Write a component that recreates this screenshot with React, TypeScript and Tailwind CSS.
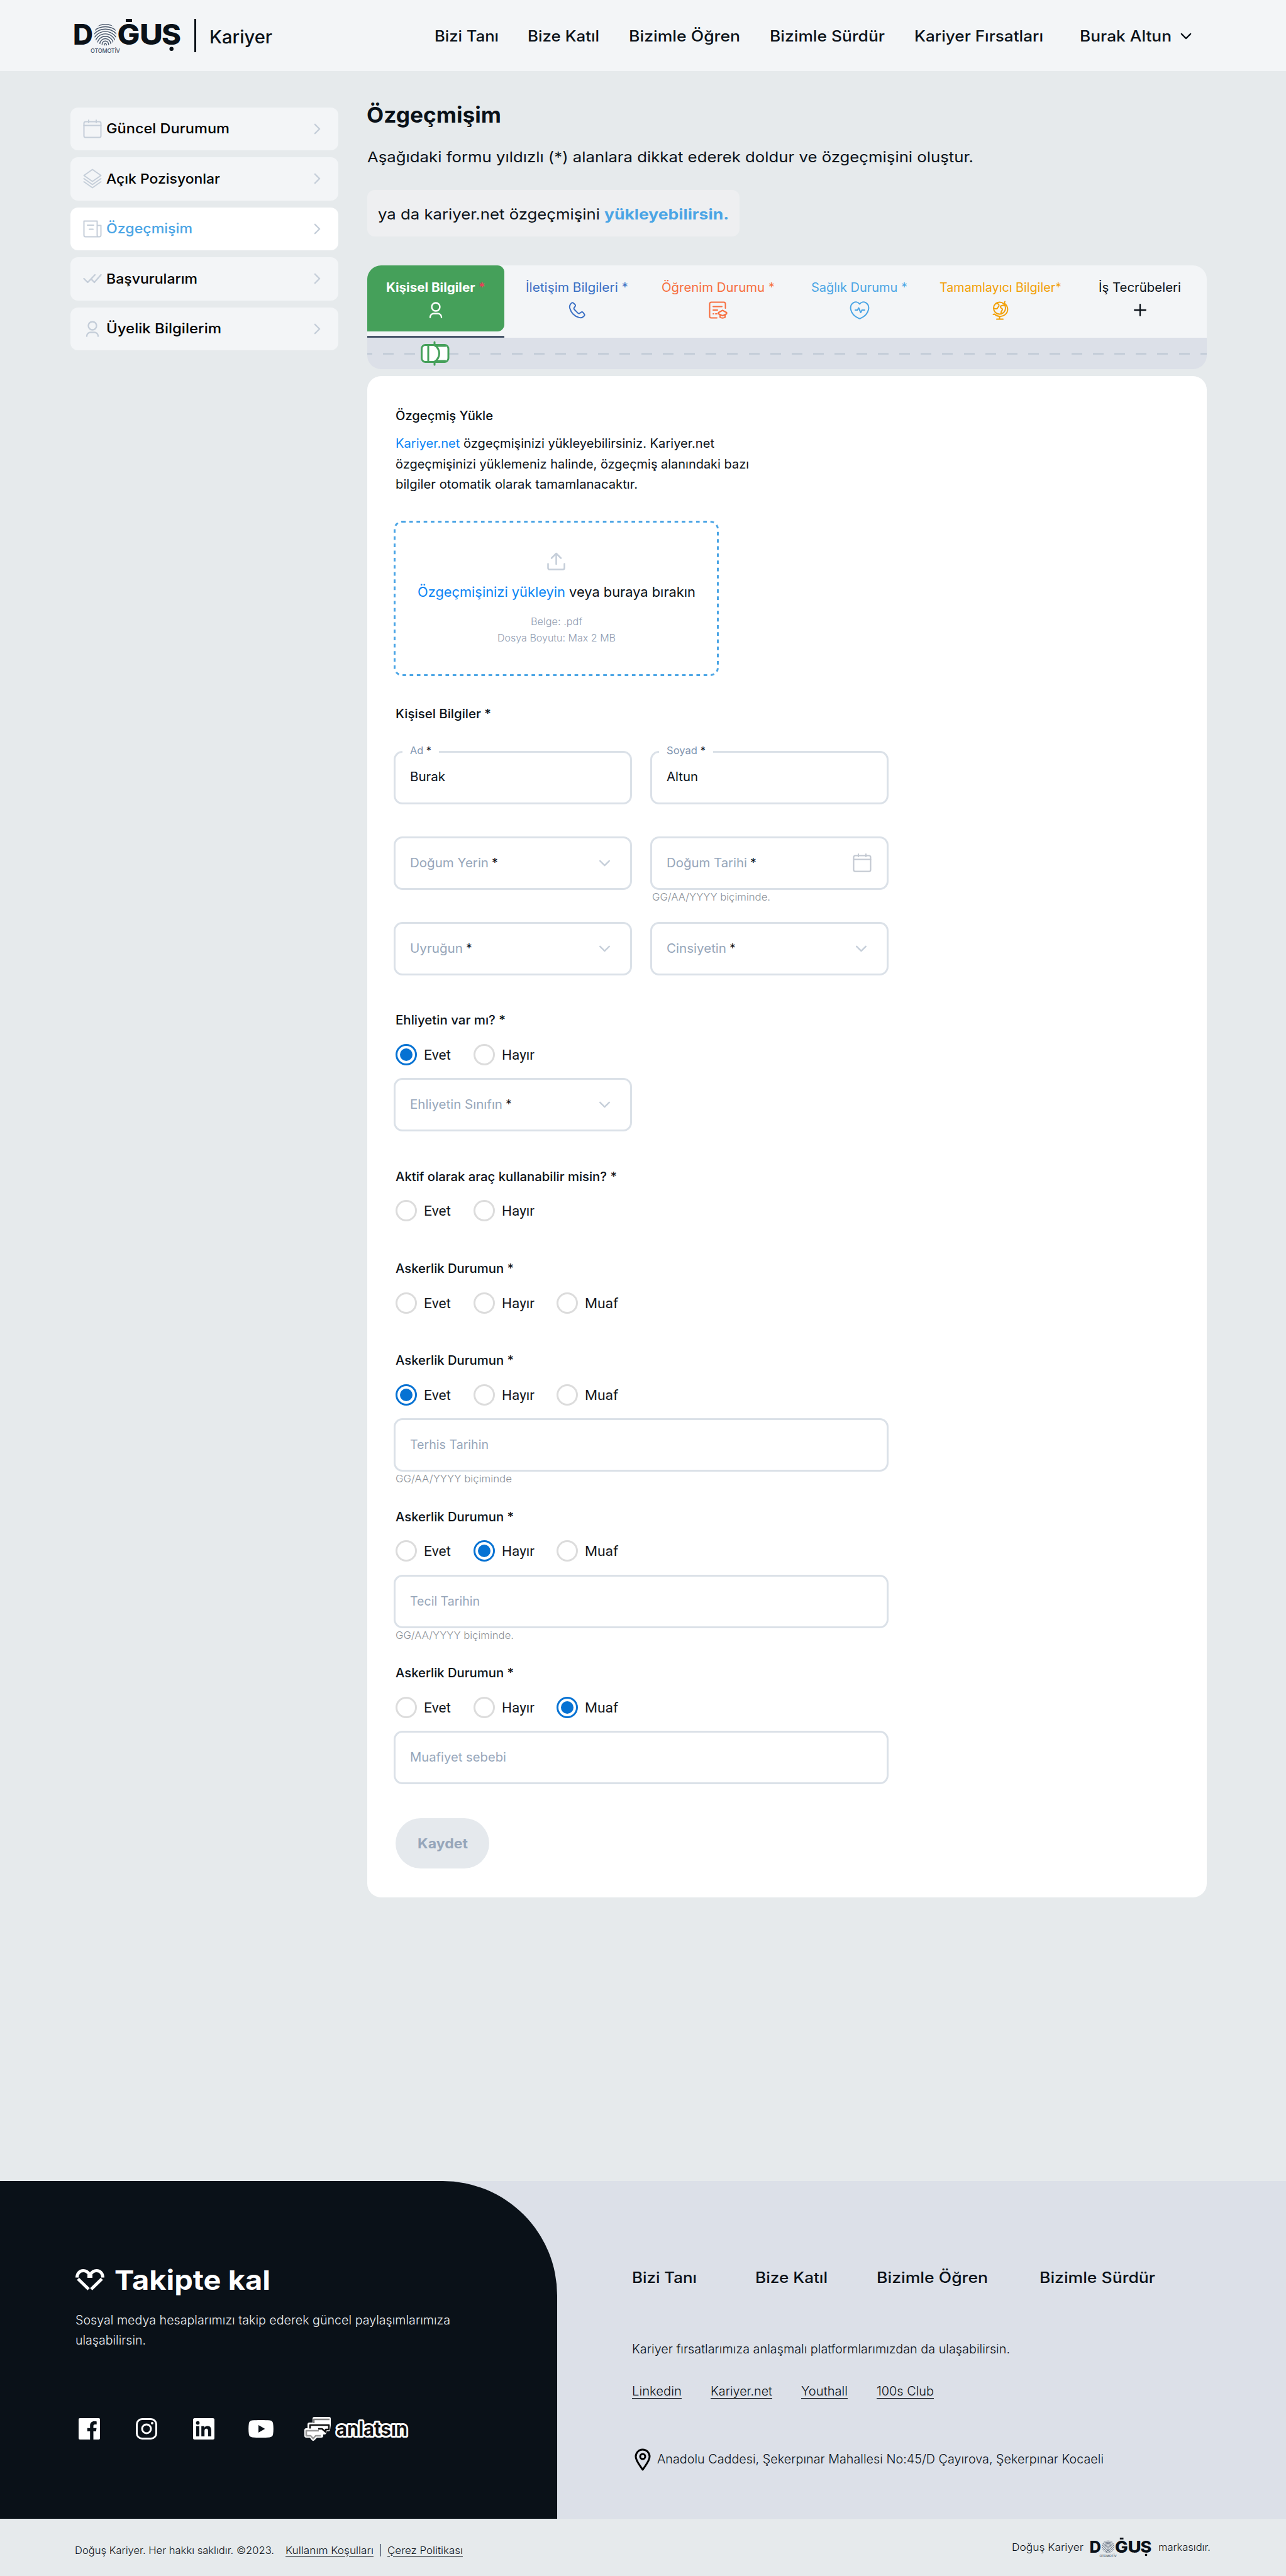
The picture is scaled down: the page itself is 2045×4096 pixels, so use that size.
import { useLayoutEffect, useRef, type ReactNode } from "react"
import clsx from "clsx"

type TextProps = { w: number; className?: string; children: ReactNode }

// Stretches the label so that it takes exactly the given width
function Text({ w, className, children }: TextProps) {
  const ref = useRef<HTMLSpanElement>(null)
  useLayoutEffect(() => {
    const el = ref.current
    if (!el) return
    el.style.transform = "none"
    el.style.transform = `scaleX(${w / el.getBoundingClientRect().width})`
  }, [w])
  return (
    <span className={clsx("block shrink-0 whitespace-nowrap", className)} style={{ width: w }}>
      <span ref={ref} className="block w-max origin-left">
        {children}
      </span>
    </span>
  )
}

function Logo({ className }: { className?: string }) {
  return (
    <svg viewBox="0 0 168 54" className={clsx("overflow-visible", className)} fill="#0a1118">
      <defs>
        <clipPath id="finger">
          <circle cx="48.5" cy="24.8" r="17.6" />
        </clipPath>
      </defs>
      <g fontFamily="Inter, sans-serif" fontWeight="800" fontSize="45">
        <text x="-3" y="41" textLength="32" lengthAdjust="spacingAndGlyphs">D</text>
        <text x="67.5" y="41" textLength="36" lengthAdjust="spacingAndGlyphs">G</text>
        <text x="103" y="41" textLength="37" lengthAdjust="spacingAndGlyphs">U</text>
        <text x="138" y="41" textLength="31" lengthAdjust="spacingAndGlyphs">S</text>
      </g>
      <rect x="81" y="0" width="10" height="5" />
      <circle cx="153.7" cy="47.7" r="3.3" />
      <g clipPath="url(#finger)" fill="none" stroke="#475569" strokeWidth="1.4">
        <path d="M46.8 43v-2.5a1.8 1.8 0 0 1 3.4 0V43" />
        {[5.2, 9, 12.8, 16.6, 20.4, 24.2, 28, 31.6].map((r) => (
          <circle key={r} cx="48.5" cy="40.5" r={r} />
        ))}
      </g>
      <text x="25" y="53.6" fontFamily="Inter, sans-serif" fontSize="9" fontWeight="500" fill="#475569" textLength="47">
        OTOMOTİV
      </text>
    </svg>
  )
}

type IconProps = { className?: string }

const line = {
  fill: "none",
  stroke: "currentColor",
  strokeWidth: 2,
  strokeLinecap: "round",
  strokeLinejoin: "round",
} as const

function ChevronRight({ className }: IconProps) {
  return (
    <svg viewBox="0 0 12 20" {...line} strokeWidth={2.6} className={className}>
      <path d="M2 2l8 8-8 8" />
    </svg>
  )
}

function ChevronDown({ className }: IconProps) {
  return (
    <svg viewBox="0 0 20 12" {...line} strokeWidth={2.5} className={className}>
      <path d="M2 2l8 8 8-8" />
    </svg>
  )
}

function CalendarIcon({ className }: IconProps) {
  return (
    <svg viewBox="0 0 30 30" {...line} className={className}>
      <rect x="1.5" y="3.5" width="27" height="25" rx="2.5" />
      <path d="M1.5 9.5h27M9 1v4M21 1v4" />
    </svg>
  )
}

function LayersIcon({ className }: IconProps) {
  return (
    <svg viewBox="0 0 30 32" {...line} className={className}>
      <path d="M15 1.5L1.5 11 15 20.5 28.5 11z" />
      <path d="M1.5 16L15 25.5 28.5 16M1.5 21L15 30.5 28.5 21" />
    </svg>
  )
}

function NewsIcon({ className }: IconProps) {
  return (
    <svg viewBox="0 0 30 28" {...line} className={className}>
      <path d="M26 26.5H4A2.5 2.5 0 0 1 1.5 24V1.5h21V24a2.5 2.5 0 0 0 2.5 2.5h1a2.5 2.5 0 0 0 2.5-2.5V8.500h-6" />
      <path d="M7 8h10M10 14.5h6" />
    </svg>
  )
}

function CheckIcon({ className }: IconProps) {
  return (
    <svg viewBox="0 0 30 16" {...line} strokeWidth={2.4} className={className}>
      <path d="M1.5 8l6 6L19 2M13 8.500l5 5.500L28.500 2" />
    </svg>
  )
}

function PersonIcon({ className }: IconProps) {
  return (
    <svg viewBox="0 0 22 26" {...line} strokeWidth={2.4} className={className}>
      <circle cx="11" cy="8" r="6.5" />
      <path d="M2 24.500v-.5c0-3 3-5.500 6-5.500h6c3 0 6 2.500 6 5.500v.5" />
    </svg>
  )
}

function PhoneIcon({ className }: IconProps) {
  return (
    <svg viewBox="0 0 28 28" {...line} className={className}>
      <path d="M8 1.8c-1.200-.9-2.500-.5-3.600.7C2 5 1.200 7.200 2.200 10.500c2.200 7.600 8 13.300 15.300 15.300 3.300 1 5.700.2 8-2.200 1.200-1.200 1.400-2.500.5-3.600l-2-2.400c-1-1.200-2.300-1.200-3.600-.3l-2 1.500c-1 .7-2 .5-2.800-.3l-6-6.100c-.8-.8-.9-1.700-.2-2.700l1.400-2c.9-1.300.9-2.600-.3-3.600z" />
    </svg>
  )
}

function DiplomaIcon({ className }: IconProps) {
  return (
    <svg viewBox="0 0 30 28" {...line} className={className}>
      <path d="M13 26.500H4A2.500 2.500 0 0 1 1.500 24V4A2.500 2.500 0 0 1 4 1.500h20A2.500 2.500 0 0 1 26.500 4v7" />
      <path d="M7 8.500h14M7 14h7M7 20h1M11 20h2" />
      <path d="M22 14.500l6.500 3.500v2L22 23l-6.500-3v-2zM18 22v3.500c2.500 1.500 5.500 1.500 8 0V22" />
    </svg>
  )
}

function HealthIcon({ className }: IconProps) {
  return (
    <svg viewBox="0 0 32 29" {...line} className={className}>
      <path d="M16 4.500C13.500 1 9.500.5 6.500 2.200 2.500 4.500 1 9 2 13.500c1.400 6 6.500 11 12.500 13.700q1.500.8 3 0C23.500 24.500 28.600 19.500 30 13.500c1-4.500-.5-9-4.500-11.300C22.500.5 18.500 1 16 4.500z" />
      <path d="M9 14h3.500l2-3.500 3.200 7.500 2-4H24" />
    </svg>
  )
}

function GlobeIcon({ className }: IconProps) {
  return (
    <svg viewBox="0 0 26 31" {...line} className={className}>
      <circle cx="11.5" cy="12" r="9.5" />
      <path d="M20 1.500l-1 2.500c7 5.500 7 14 1 18.500-5 3.800-12 3.500-16.500-1L1.500 22M11.500 25v4.500M7 29.500h10" />
      <path d="M6 4.500c3 0 5 1.500 4.500 4-.5 2-2 1.500-2.200 3.200-.3 1.500-3.300 2-6 .3M20 8c-4-1-7.500 0-7 2.500.5 1.800 3 1.500 3 3.500s-3 3-2 6" />
    </svg>
  )
}

function PlusIcon({ className }: IconProps) {
  return (
    <svg viewBox="0 0 20 20" {...line} strokeWidth={2.3} className={className}>
      <path d="M10 1.200v17.600M1.200 10h17.600" />
    </svg>
  )
}

function CarIcon({ className }: IconProps) {
  return (
    <svg viewBox="0 0 48 40" {...line} stroke="#45a05a" strokeWidth={3} className={className}>
      <path d="M23 2v5M23 33v5" />
      <rect x="2.5" y="6.500" width="42.500" height="27" rx="6" fill="#fff" />
      <path d="M13 6.500v27M21 6.500h2.500c4 3.500 7 8.500 7 13.500s-3 10-7 13.500H21" />
      <path d="M24 8h16M24 32h16" />
    </svg>
  )
}

const nav = [
  { label: "Bizi Tanı", w: 102, cls: "" },
  { label: "Bize Katıl", w: 114, cls: "ml-[46px]" },
  { label: "Bizimle Öğren", w: 177, cls: "ml-[47px]" },
  { label: "Bizimle Sürdür", w: 183, cls: "ml-[47px]" },
  { label: "Kariyer Fırsatları", w: 205, cls: "ml-[47px]" },
  { label: "Burak Altun", w: 146, cls: "ml-[58px]" },
]

function Header() {
  return (
    <header className="flex h-[113px] items-center bg-[#f3f5f7] pl-[119px]">
      <Logo className="mt-px h-[54px] w-[168px]" />
      <span className="ml-[22px] h-[53px] w-[3px] bg-[#0a1118]" />
      <Text w={100} className="mt-[5px] ml-[21px] text-[28px] leading-8 font-medium">Kariyer</Text>
      <nav className="ml-[258px] flex items-center text-2xl font-medium">
        {nav.map((item) => (
          <Text key={item.label} w={item.w} className={clsx("mt-0.5", item.cls)}>{item.label}</Text>
        ))}
        <ChevronDown className="mt-0.5 ml-[14px] h-[11px] w-[18px]" />
      </nav>
    </header>
  )
}

const menu = [
  { label: "Güncel Durumum", w: 196, Icon: CalendarIcon, icon: "h-[30px] w-[30px]" },
  { label: "Açık Pozisyonlar", w: 181, Icon: LayersIcon, icon: "h-8 w-[30px]" },
  { label: "Özgeçmişim", w: 137, Icon: NewsIcon, icon: "h-7 w-[30px]", active: true },
  { label: "Başvurularım", w: 145, Icon: CheckIcon, icon: "h-4 w-[30px]" },
  { label: "Üyelik Bilgilerim", w: 183, Icon: PersonIcon, icon: "h-[26px] w-[22px]" },
]

function Sidebar() {
  return (
    <aside className="mt-[57.5px] flex w-[426px] flex-col gap-[11px]">
      {menu.map(({ label, w, Icon, icon, active }) => (
        <a
          key={label}
          className={clsx(
            "flex h-[68.5px] items-center rounded-xl pr-7 pl-[19px]",
            active ? "bg-white text-[#4ba5e5]" : "bg-[#f3f5f7] text-black"
          )}
        >
          <span className="flex w-[31px] justify-center text-[#c5ced9]">
            <Icon className={icon} />
          </span>
          <Text w={w} className="ml-[7px] text-[22px] font-medium">{label}</Text>
          <ChevronRight className="ml-auto h-[18px] w-[11px] text-[#c5ced9]" />
        </a>
      ))}
    </aside>
  )
}

const tabs = [
  { label: "İletişim Bilgileri *", w: 163, Icon: PhoneIcon, cls: "w-[230px] text-[#3a6fc4]", icon: "h-[27px] w-[27px]" },
  { label: "Öğrenim Durumu *", w: 180, Icon: DiplomaIcon, cls: "w-[219px] text-[#f76f40]", icon: "h-7 w-[30px]" },
  { label: "Sağlık Durumu *", w: 153, Icon: HealthIcon, cls: "w-[231px] text-[#4ba5e5]", icon: "h-[29px] w-8" },
  { label: "Tamamlayıcı Bilgiler*", w: 194, Icon: GlobeIcon, cls: "w-[218px] text-[#f2a007]", icon: "h-[31px] w-[26px]" },
  { label: "İş Tecrübeleri", w: 131, Icon: PlusIcon, cls: "w-[225px] text-[#0a1118]", icon: "h-5 w-5" },
]

function Tabs() {
  return (
    <div className="mt-[46px] overflow-hidden rounded-[22px]">
      <div className="flex h-[115px] bg-[#f3f5f7] text-[19.5px] leading-6">
        <div className="flex w-[218.4px] shrink-0 flex-col justify-between border-b-[3px] border-[#475569]">
          <div className="flex h-[105px] flex-col items-center rounded-r-[11px] bg-[#45a05a] pt-[23px] font-bold text-white">
            <Text w={158}>
              Kişisel Bilgiler <span className="text-[#f03a57]">*</span>
            </Text>
            <span className="mt-[10px] flex h-7 items-center">
              <PersonIcon className="h-[26px] w-[22px]" />
            </span>
          </div>
        </div>
        {tabs.map(({ label, w, Icon, cls, icon }) => (
          <div key={label} className={clsx("flex shrink-0 flex-col items-center pt-[23px]", cls)}>
            <Text w={w}>{label}</Text>
            <span className="mt-[10px] flex h-7 items-center">
              <Icon className={icon} />
            </span>
          </div>
        ))}
      </div>
      <div className="relative flex h-[50px] items-center bg-[#dce0e8]">
        <div className="h-[3px] w-full bg-[repeating-linear-gradient(90deg,#c5ced9_0_17px,transparent_17px_34.2px)] bg-[position:-9px_0] bg-[length:1400px_3px]" />
        <CarIcon className="absolute top-[5px] left-[84px] h-10 w-12" />
      </div>
    </div>
  )
}

type FieldProps = {
  label: string
  w: number
  star?: boolean
  icon?: "chevron" | "calendar"
  hint?: string
  hintW?: number
}

function Field({ label, w, star, icon, hint, hintW = 188 }: FieldProps) {
  return (
    <div className="relative flex h-[85px] items-center rounded-[14px] border-[3px] border-[#dbe1e8] pr-6 pl-[23px] text-[19.5px]">
      <Text w={w} className="text-[#96a6ba]">{label}</Text>
      {star && <span className="ml-[5px] text-[#0a1118]">*</span>}
      {icon === "chevron" && <ChevronDown className="mr-[7px] ml-auto h-[11px] w-[19px] text-[#c5ced9]" />}
      {icon === "calendar" && <CalendarIcon className="ml-auto h-[30px] w-[30px] text-[#c2c8d1]" />}
      {hint && (
        <Text w={hintW} className="absolute top-[83px] left-0 text-[16.5px] leading-5 font-light text-[#8a8f96]">{hint}</Text>
      )}
    </div>
  )
}

function FilledField({ label, w, value, valueW }: { label: string; w: number; value: string; valueW: number }) {
  return (
    <div className="relative flex h-[85px] items-center rounded-[14px] border-[3px] border-[#dbe1e8] pl-[23px] text-[19.5px]">
      <span className="absolute -top-[16px] left-[11px] bg-white px-3 text-base leading-6 text-[#8095b0]">
        <Text w={w}>
          {label} <span className="text-[#0a1118]">*</span>
        </Text>
      </span>
      <Text w={valueW}>{value}</Text>
    </div>
  )
}

const options = [
  { label: "Evet", w: 43, cls: "w-[123.5px]" },
  { label: "Hayır", w: 52, cls: "w-[132px]" },
  { label: "Muaf", w: 53, cls: "" },
]

type QuestionProps = { title: string; w: number; count: number; picked?: string; children?: ReactNode }

function Question({ title, w, count, picked, children }: QuestionProps) {
  return (
    <section className={clsx(children ? "h-[248.5px]" : "h-[146.4px]")}>
      <div className="pl-[3px]">
        <Text w={w} className="text-[19.5px] leading-6 font-medium">{title}</Text>
        <div className="mt-[25.5px] flex font-[Roboto,sans-serif] text-[22.5px] leading-[34px] text-[#14181d]">
          {options.slice(0, count).map((option) => (
            <label key={option.label} className={clsx("flex items-center gap-[11px]", option.cls)}>
              <span
                className={clsx(
                  "flex size-[34px] shrink-0 items-center justify-center rounded-full border-[3px]",
                  picked === option.label ? "border-[#0672d3]" : "border-[#dcdcdc]"
                )}
              >
                {picked === option.label && <span className="size-5 rounded-full bg-[#0672d3]" />}
              </span>
              <Text w={option.w}>{option.label}</Text>
            </label>
          ))}
        </div>
      </div>
      {children && <div className="mt-[20.5px]">{children}</div>}
    </section>
  )
}

function FormCard() {
  return (
    <div className="mt-[11px] h-[2419px] rounded-[22px] bg-white pt-[51px] pl-[42px]">
      <div className="pl-[3px]">
        <Text w={155} className="text-[19.5px] leading-6 font-medium">Özgeçmiş Yükle</Text>
        <div className="mt-[16px] flex flex-col text-[19.5px] leading-[32.7px]">
          <Text w={507}>
            <span className="text-[#0a84f5]">Kariyer.net</span> özgeçmişinizi yükleyebilirsiniz. Kariyer.net
          </Text>
          <Text w={562}>özgeçmişinizi yüklemeniz halinde, özgeçmiş alanındaki bazı</Text>
          <Text w={385}>bilgiler otomatik olarak tamamlanacaktır.</Text>
        </div>
      </div>

      <div className="relative mt-[41px] flex h-[247px] w-[517px] flex-col items-center pt-[50px]">
        <svg className="absolute inset-0 h-full w-full" fill="none" stroke="#4ba5e5" strokeWidth="3">
          <rect x="1.5" y="1.5" width="514" height="244" rx="12" strokeDasharray="5.7 5.7" />
        </svg>
        <svg viewBox="0 0 29 29" {...line} strokeWidth={2.5} className="size-[29px] text-[#c5ced9]">
          <path d="M14.500 19V2M7 9.500L14.500 2 22 9.500M1.500 18.500V25A2.500 2.500 0 0 0 4 27.500h21a2.500 2.500 0 0 0 2.500-2.500v-6.500" />
        </svg>
        <Text w={442} className="mt-5 text-[22px] leading-7">
          <span className="text-[#0a84f5]">Özgeçmişinizi yükleyin</span> veya buraya bırakın
        </Text>
        <Text w={82} className="mt-[20px] text-base leading-[26px] font-light text-[#8e9bb0]">Belge: .pdf</Text>
        <Text w={188} className="text-base leading-[26px] font-light text-[#8e9bb0]">Dosya Boyutu: Max 2 MB</Text>
      </div>

      <Text w={152} className="mt-12 ml-[3px] text-[19.5px] leading-6 font-medium">Kişisel Bilgiler *</Text>

      <div className="mt-[46.5px] grid w-[787px] grid-cols-2 gap-x-[29px] gap-y-[51.3px]">
        <FilledField label="Ad" w={34} value="Burak" valueW={56} />
        <FilledField label="Soyad" w={62} value="Altun" valueW={50} />
        <Field label="Doğum Yerin" w={125} star icon="chevron" />
        <Field label="Doğum Tarihi" w={128} star icon="calendar" hint="GG/AA/YYYY biçiminde." />
        <Field label="Uyruğun" w={84} star icon="chevron" />
        <Field label="Cinsiyetin" w={95} star icon="chevron" />
      </div>

      <div className="mt-[59px] w-[787px]">
        <Question title="Ehliyetin var mı? *" w={175} count={2} picked="Evet">
          <div className="w-[379px]">
            <Field label="Ehliyetin Sınıfın" w={147} star icon="chevron" />
          </div>
        </Question>
        <Question title="Aktif olarak araç kullanabilir misin? *" w={352} count={2} />
        <Question title="Askerlik Durumun *" w={188} count={3} />
        <Question title="Askerlik Durumun *" w={188} count={3} picked="Evet">
          <Field label="Terhis Tarihin" w={125} hint="GG/AA/YYYY biçiminde" hintW={185} />
        </Question>
        <Question title="Askerlik Durumun *" w={188} count={3} picked="Hayır">
          <Field label="Tecil Tarihin" w={111} hint="GG/AA/YYYY biçiminde." />
        </Question>
        <Question title="Askerlik Durumun *" w={188} count={3} picked="Muaf">
          <Field label="Muafiyet sebebi" w={153} />
        </Question>
      </div>

      <button className="-mt-[6px] ml-[3px] flex h-20 w-[149px] items-center justify-center rounded-full bg-[#e5e9ed] text-[21.5px] font-bold text-[#96a6ba]">
        <Text w={80}>Kaydet</Text>
      </button>
    </div>
  )
}

function Content() {
  return (
    <div className="ml-[46px] w-[1335px]">
      <Text w={214} className="mt-[50px] -ml-px text-[34.5px] leading-10 font-bold">Özgeçmişim</Text>
      <Text w={964} className="mt-8 text-[23.5px] leading-[30px]">
        Aşağıdaki formu yıldızlı (*) alanlara dikkat ederek doldur ve özgeçmişini oluştur.
      </Text>
      <div className="mt-[37px] flex h-[74px] w-[592px] items-center rounded-xl bg-[#eeeff1] pt-[3px] pl-[17px] text-[23.5px]">
        <Text w={353}>ya da kariyer.net özgeçmişini</Text>
        <Text w={198} className="ml-[7px] font-bold text-[#4ba5e5]">yükleyebilirsin.</Text>
      </div>
      <Tabs />
      <FormCard />
    </div>
  )
}

function SocialLinks() {
  return (
    <div className="mt-[104px] flex h-[42px] items-center pl-[5px] text-white">
      <svg viewBox="0 0 34 34" className="size-[34px]" fill="currentColor">
        <path d="M2 0h30a2 2 0 0 1 2 2v30a2 2 0 0 1-2 2h-8.500V21h4.300l.7-5.200h-5V12.500c0-1.500.5-2.500 2.600-2.500h2.600V5.300c-.5 0-2-.2-3.900-.2-3.900 0-6.600 2.400-6.600 6.700v4h-4.400V21h4.400v13H2a2 2 0 0 1-2-2V2a2 2 0 0 1 2-2z" />
      </svg>
      <svg viewBox="0 0 34 34" className="ml-[57px] size-[34px]" fill="none" stroke="currentColor" strokeWidth="3">
        <rect x="1.5" y="1.5" width="31" height="31" rx="8.5" />
        <circle cx="17" cy="17" r="7" />
        <circle cx="26" cy="8" r="2" fill="currentColor" stroke="none" />
      </svg>
      <svg viewBox="0 0 34 34" className="ml-[57px] size-[34px]" fill="currentColor">
        <path
          fillRule="evenodd"
          d="M2.500 0h29A2.500 2.500 0 0 1 34 2.500v29a2.500 2.500 0 0 1-2.500 2.500h-29A2.500 2.500 0 0 1 0 31.500v-29A2.500 2.500 0 0 1 2.500 0zM5 12.800V29h5V12.800zM7.500 4.700a2.900 2.900 0 1 0 0 5.800 2.900 2.900 0 0 0 0-5.800zM13.200 12.800V29h5v-8c0-2.100.4-4.200 3-4.200s2.700 2.500 2.700 4.300V29h5v-8.900c0-4.400-1-7.700-6-7.700-2.500 0-4.100 1.300-4.800 2.600h-.1v-2.200z"
        />
      </svg>
      <svg viewBox="0 0 40 28" className="ml-[54px] h-7 w-10" fill="currentColor">
        <path fillRule="evenodd" d="M6 .6c8-.8 20-.8 28 0 3 .3 4.800 2 5.200 5 .8 5 .8 12 0 17-.4 3-2.200 4.500-5.200 4.800-8 .8-20 .8-28 0-3-.3-4.800-1.800-5.200-4.800-.8-5-.8-12 0-17C1.200 2.600 3 .9 6 .6zM16 8v12l10.400-6z" />
      </svg>
      <svg viewBox="0 0 168 42" className="ml-12 h-[42px] w-[168px] overflow-visible">
        <path
          d="M17 5h23v10l-1 7h-4l-2 5h-5v5h-8l-5 5-4-5H4v-9h5v-9h8z"
          fill="#fff"
          stroke="#fff"
          strokeWidth="6"
          strokeLinejoin="round"
        />
        <g fill="none" strokeWidth="2.6" strokeLinejoin="round">
          <path d="M16 12V6h25" stroke="#808080" />
          <path d="M10 20.500V15h30v7h-5v4l-6-5h-6" stroke="#111" />
          <path d="M24 24H4v8h7l4 4.500 4-4.500h8" stroke="#999" />
        </g>
        <text
          x="52"
          y="32"
          textLength="113"
          lengthAdjust="spacingAndGlyphs"
          fontFamily="Inter, sans-serif"
          fontWeight="700"
          fontSize="31"
          fill="#111"
          stroke="#fff"
          strokeWidth="6"
          strokeLinejoin="round"
          paintOrder="stroke"
        >
          anlatsın
        </text>
      </svg>
    </div>
  )
}

function Footer() {
  return (
    <footer>
      <div className="flex h-[537px] bg-[#dce0e8]">
        <div className="w-[886px] rounded-tr-[182px] bg-[#0a1118] pt-[132px] pl-[120px]">
          <div className="flex items-center text-white">
            <svg viewBox="0 0 46 34" className="h-[34px] w-[46px]" fill="none" stroke="currentColor" strokeWidth="5">
              <path d="M2.500 13.500C2.500 7 6.500 2.500 12.500 2.500c4 0 7 2 9 5v4h3v-4c2-3 5-5 9-5 6 0 10 4.500 10 11" />
              <path d="M4 15.500l17 16.500M42 15.500L25 32" />
            </svg>
            <Text w={248} className="ml-[16px] text-[43px] leading-[50px] font-bold">Takipte kal</Text>
          </div>
          <div className="mt-[23px] flex flex-col text-[19.5px] leading-8 font-light text-[#eceef0]">
            <Text w={596}>Sosyal medya hesaplarımızı takip ederek güncel paylaşımlarımıza</Text>
            <Text w={112}>ulaşabilirsin.</Text>
          </div>
          <SocialLinks />
        </div>
        <div className="pt-[139px] pl-[119px]">
          <div className="flex text-[24px] leading-[30px] font-medium">
            <Text w={103}>Bizi Tanı</Text>
            <Text w={115} className="ml-[93px]">Bize Katıl</Text>
            <Text w={177} className="ml-[78px]">Bizimle Öğren</Text>
            <Text w={184} className="ml-[82px]">Bizimle Sürdür</Text>
          </div>
          <Text w={601} className="mt-[86px] text-[19.5px] leading-6 font-light">
            Kariyer fırsatlarımıza anlaşmalı platformlarımızdan da ulaşabilirsin.
          </Text>
          <div className="mt-[43px] flex text-[19.5px] leading-6 font-light underline underline-offset-4">
            <Text w={79}>Linkedin</Text>
            <Text w={98} className="ml-[46px]">Kariyer.net</Text>
            <Text w={74} className="ml-[46px]">Youthall</Text>
            <Text w={91} className="ml-[46px]">100s Club</Text>
          </div>
          <div className="mt-[79px] flex items-center">
            <svg viewBox="0 0 26 36" className="ml-[4px] h-9 w-[26px]" {...line} strokeWidth={3} stroke="#000">
              <path d="M13 34C8 26 2 20 2 13a11 11 0 0 1 22 0c0 7-6 13-11 21z" />
              <circle cx="13" cy="13" r="4" />
            </svg>
            <Text w={710} className="ml-[10px] text-[19.5px] font-light">
              Anadolu Caddesi, Şekerpınar Mahallesi No:45/D Çayırova, Şekerpınar Kocaeli
            </Text>
          </div>
        </div>
      </div>
      <div className="flex h-[91px] items-center pr-[120px] pl-[119px] text-[16.5px] font-light">
        <div className="mt-[9px] flex">
          <Text w={317}>Doğuş Kariyer. Her hakkı saklıdır. ©2023.</Text>
          <Text w={140} className="ml-[18px] underline underline-offset-3">Kullanım Koşulları</Text>
          <span className="w-[22px] text-center">|</span>
          <Text w={120} className="underline underline-offset-3">Çerez Politikası</Text>
        </div>
        <div className="ml-auto flex items-center">
          <Text w={114}>Doğuş Kariyer</Text>
          <Logo className="ml-[11px] h-[31px] w-[97px]" />
          <Text w={83} className="ml-[11px]">markasıdır.</Text>
        </div>
      </div>
    </footer>
  )
}

export default function App() {
  return (
    <div className="min-h-[4096px] w-[2045px] bg-[#e6eaec] font-[Inter,sans-serif] text-[#0a1118]">
      <Header />
      <main className="flex h-[3355px] items-start pl-[112px]">
        <Sidebar />
        <Content />
      </main>
      <Footer />
    </div>
  )
}
